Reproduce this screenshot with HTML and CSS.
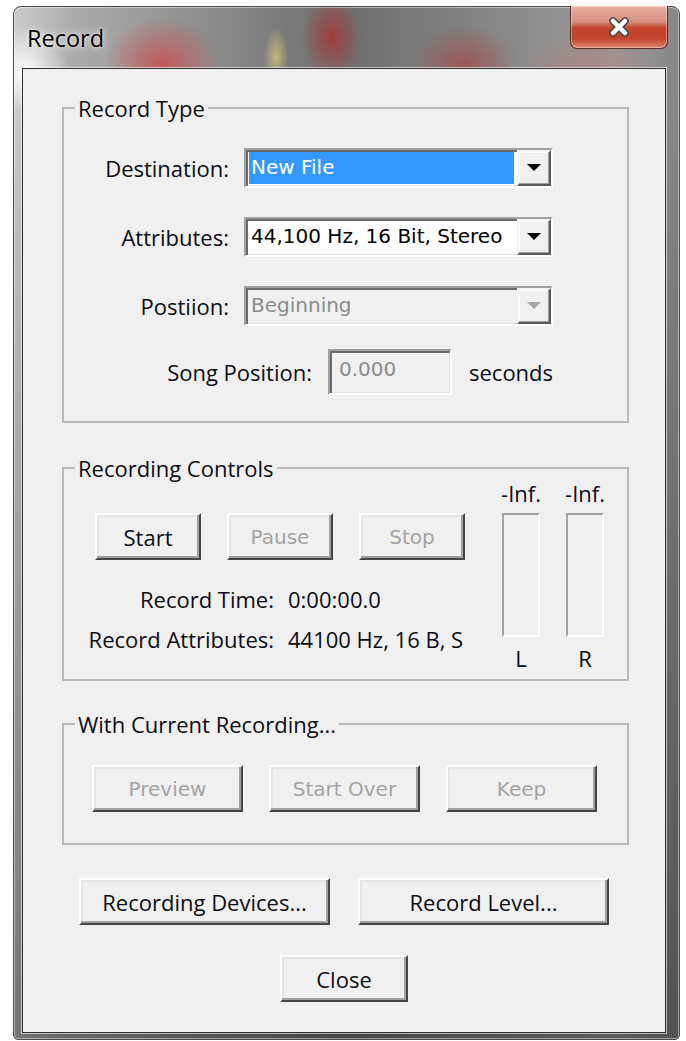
FILE: index.html
```html
<!DOCTYPE html>
<html lang="en">
<head>
<meta charset="utf-8">
<title>Record</title>
<link rel="stylesheet" href="styles.css">
</head>
<body>
<div class="window">
  <div class="titlebar">
    <span class="title">Record</span>
    <button class="close-btn" aria-label="Close">
      <svg width="28" height="22" viewBox="0 0 28 22">
        <path d="M8 5 L20 17 M20 5 L8 17" stroke="#4a4a4a" stroke-width="7.5" stroke-linecap="round"/>
        <path d="M8 5 L20 17 M20 5 L8 17" stroke="#ffffff" stroke-width="4.5" stroke-linecap="round"/>
      </svg>
    </button>
  </div>

  <div class="client">
    <fieldset class="group group-type">
      <legend>Record Type</legend>
      <div class="type-grid">
        <label class="lbl">Destination:</label>
        <div class="combo">
          <span class="combo-value selected">New File</span>
          <span class="combo-drop"><svg width="14" height="8" viewBox="0 0 14 8"><path d="M0 0H14L7 7Z" fill="#000"/></svg></span>
        </div>

        <label class="lbl">Attributes:</label>
        <div class="combo">
          <span class="combo-value">44,100 Hz, 16 Bit, Stereo</span>
          <span class="combo-drop"><svg width="14" height="8" viewBox="0 0 14 8"><path d="M0 0H14L7 7Z" fill="#000"/></svg></span>
        </div>

        <label class="lbl">Postiion:</label>
        <div class="combo disabled">
          <span class="combo-value">Beginning</span>
          <span class="combo-drop"><svg width="14" height="8" viewBox="0 0 14 8"><path d="M0 0H14L7 7Z" fill="#a6a6a6"/></svg></span>
        </div>
      </div>
      <div class="song-row">
        <label class="lbl">Song Position:</label>
        <div class="textbox">0.000</div>
        <span class="lbl-plain">seconds</span>
      </div>
    </fieldset>

    <fieldset class="group group-controls">
      <legend>Recording Controls</legend>
      <div class="rec-body">
        <div class="rec-main">
          <div class="rec-buttons">
            <button class="btn btn-small">Start</button>
            <button class="btn btn-small" disabled>Pause</button>
            <button class="btn btn-small" disabled>Stop</button>
          </div>
          <div class="rec-info">
            <span class="lbl">Record Time:</span>
            <span class="val">0:00:00.0</span>
            <span class="lbl">Record Attributes:</span>
            <span class="val">44100 Hz, 16 B, S</span>
          </div>
        </div>
        <div class="meters">
          <div class="meter">
            <span class="meter-db">-Inf.</span>
            <div class="meter-bar"></div>
            <span class="meter-ch">L</span>
          </div>
          <div class="meter">
            <span class="meter-db">-Inf.</span>
            <div class="meter-bar"></div>
            <span class="meter-ch">R</span>
          </div>
        </div>
      </div>
    </fieldset>

    <fieldset class="group group-keep">
      <legend>With Current Recording...</legend>
      <div class="keep-row">
        <button class="btn btn-mid" disabled>Preview</button>
        <button class="btn btn-mid" disabled>Start Over</button>
        <button class="btn btn-mid" disabled>Keep</button>
      </div>
    </fieldset>

    <div class="footer-row">
      <button class="btn btn-wide">Recording Devices...</button>
      <button class="btn btn-wide">Record Level...</button>
    </div>
    <button class="btn btn-close">Close</button>
  </div>
</div>
</body>
</html>
```

FILE: styles.css
```css
* {
  box-sizing: border-box;
}

html, body {
  margin: 0;
  padding: 0;
}

body {
  width: 686px;
  height: 1041px;
  overflow: hidden;
  background: #ffffff;
  font-family: "Open Sans", "Noto Sans", sans-serif;
  font-size: 22px;
  color: #0c0c14;
}

/* Aero-style window frame with glass title bar */
.window {
  margin: 6px 0 0 13px;
  width: 667px;
  height: 1034px;
  padding: 0 13px 8px 8px;
  display: flex;
  flex-direction: column;
  border: 1px solid #4c4c4c;
  border-radius: 8px 8px 5px 5px;
  box-shadow: inset 0 0 0 1px rgba(255, 255, 255, 0.45);
  background:
    radial-gradient(circle at 10px 64px, rgba(255, 255, 255, 0.95) 0, rgba(255, 255, 255, 0) 44px),
    radial-gradient(ellipse 58px 46px at 148px 56px, rgba(200, 80, 80, 0.85) 0, rgba(200, 80, 80, 0) 100%),
    radial-gradient(ellipse 12px 30px at 262px 50px, rgba(215, 200, 120, 0.75) 0, rgba(215, 200, 120, 0) 100%),
    radial-gradient(ellipse 30px 42px at 318px 30px, rgba(175, 45, 45, 0.75) 0, rgba(175, 45, 45, 0) 100%),
    radial-gradient(ellipse 52px 38px at 450px 56px, rgba(175, 60, 60, 0.6) 0, rgba(175, 60, 60, 0) 100%),
    radial-gradient(ellipse 70px 40px at 575px 62px, rgba(190, 110, 110, 0.45) 0, rgba(190, 110, 110, 0) 100%),
    linear-gradient(180deg, rgba(0, 0, 0, 0) 0, rgba(0, 0, 0, 0) 80px, rgba(30, 30, 30, 0.5) 100%),
    linear-gradient(90deg, #cbcbcb 0, #acacac 60px, #868686 220px, #6e6e6e 330px, #868686 480px, #9c9c9c 600px, #858585 667px);
}

.titlebar {
  height: 61px;
  flex: none;
  display: flex;
  justify-content: space-between;
  align-items: flex-start;
  padding-left: 5px;
}

.title {
  margin-top: 16px;
  font-size: 23.5px;
  line-height: 30px;
  color: #000;
  text-shadow: 0 0 8px rgba(255, 255, 255, 0.9), 0 0 3px rgba(255, 255, 255, 0.8);
}

.close-btn {
  margin: -1px -2px 0 0;
  width: 98px;
  height: 43px;
  padding: 0;
  display: flex;
  align-items: center;
  justify-content: center;
  border: 1px solid #5b2c24;
  border-top: none;
  border-radius: 0 0 7px 7px;
  background: linear-gradient(180deg, #e6b2a5 0%, #d88f7e 38%, #c4432c 52%, #c2452f 78%, #df8570 100%);
  box-shadow: inset 0 0 0 1px rgba(255, 255, 255, 0.35);
}

/* Dialog client area */
.client {
  flex: 1;
  display: flex;
  flex-direction: column;
  align-items: flex-start;
  padding: 26px 0 30px;
  background: #f0f0f0;
  border: 1px solid #303030;
  box-shadow: 0 0 0 1px rgba(255, 255, 255, 0.6);
}

/* Group boxes */
.group {
  margin: 0 0 0 39px;
  padding: 0;
  width: 567px;
  min-width: 0;
  border: 2px solid #b9b9b9;
}

.group legend {
  margin-left: 11px;
  padding: 0 3px;
  font-size: 22px;
  line-height: 26px;
  color: #0c0c14;
}

.group-controls {
  margin-top: 32px;
}

.group-keep {
  margin-top: 30px;
}

.lbl {
  text-align: right;
  white-space: nowrap;
}

.lbl-plain,
.val {
  white-space: nowrap;
}

/* Record Type fields */
.type-grid {
  display: grid;
  grid-template-columns: 165px 309px;
  grid-auto-rows: 40px;
  column-gap: 15px;
  row-gap: 29px;
  align-items: center;
  padding-top: 27px;
}

.combo {
  display: flex;
  height: 40px;
  padding: 2px 0 0 3px;
  background: #ffffff;
  border: 2px solid;
  border-color: #a0a0a0 #ffffff #ffffff #a0a0a0;
  box-shadow: inset 2px 2px 0 #6a6a6a, inset -1px -1px 0 #e3e3e3;
  font-family: "DejaVu Sans", sans-serif;
  font-size: 20px;
}

.combo-value {
  flex: 1;
  margin: 0 3px 2px 0;
  padding-left: 2px;
  line-height: 31px;
  color: #000;
  white-space: nowrap;
  overflow: hidden;
}

.combo-value.selected {
  background: #3399ff;
  color: #ffffff;
}

.combo-drop {
  width: 34px;
  margin-top: -2px;
  display: flex;
  align-items: center;
  justify-content: center;
  background: #f0f0f0;
  border: 2px solid;
  border-color: #f4f4f4 #5a5a5a #5a5a5a #f4f4f4;
  box-shadow: inset -1px -1px 0 #a0a0a0, inset 1px 1px 0 #ffffff;
}

.combo.disabled {
  background: #f0f0f0;
}

.combo.disabled .combo-value {
  color: #8c8c8c;
}

.song-row {
  display: grid;
  grid-template-columns: 248px 124px auto;
  column-gap: 16px;
  align-items: center;
  margin-top: 23px;
  padding-bottom: 26px;
}

.song-row .lbl-plain {
  margin-left: 1px;
}

.textbox {
  height: 46px;
  padding: 4px 0 0 9px;
  background: #f0f0f0;
  border: 2px solid;
  border-color: #a0a0a0 #ffffff #ffffff #a0a0a0;
  box-shadow: inset 2px 2px 0 #6a6a6a, inset -1px -1px 0 #e3e3e3;
  font-family: "DejaVu Sans", sans-serif;
  font-size: 20px;
  line-height: 28px;
  color: #8c8c8c;
}

/* Push buttons */
.btn {
  height: 47px;
  padding: 0;
  background: #f0f0f0;
  border: 2px solid;
  border-color: #ffffff #454545 #454545 #ffffff;
  box-shadow: inset -2px -2px 0 #a0a0a0, inset 2px 2px 0 #e6e6e6;
  font-family: "Open Sans", "Noto Sans", sans-serif;
  font-size: 22px;
  color: #0c0c14;
}

.btn:disabled {
  font-family: "DejaVu Sans", sans-serif;
  font-size: 20px;
  color: #a3a3a3;
}

.btn-small {
  width: 106px;
}

.btn-mid {
  width: 151px;
}

.btn-wide {
  width: 251px;
}

/* Recording controls */
.rec-body {
  display: flex;
  padding-bottom: 9px;
}

.rec-main {
  width: 430px;
  flex: none;
  padding-top: 32px;
}

.rec-buttons {
  display: flex;
  gap: 26px;
  padding-left: 31px;
}

.rec-info {
  display: grid;
  grid-template-columns: 210px auto;
  grid-auto-rows: 40px;
  column-gap: 14px;
  align-items: center;
  margin-top: 19px;
}

.meters {
  display: flex;
  gap: 10px;
}

.meter {
  width: 54px;
  display: flex;
  flex-direction: column;
  align-items: center;
}

.meter-db,
.meter-ch {
  line-height: 24px;
}

.meter-bar {
  width: 38px;
  height: 124px;
  margin-top: 8px;
  background: #f0f0f0;
  border: 2px solid;
  border-color: #a3a3a3 #ffffff #ffffff #a3a3a3;
}

.meter-ch {
  margin-top: 9px;
}

/* With current recording */
.keep-row {
  display: flex;
  gap: 26px;
  padding: 28px 0 31px 28px;
}

/* Bottom buttons */
.footer-row {
  align-self: center;
  display: flex;
  gap: 28px;
  margin-top: 33px;
}

.btn-close {
  align-self: center;
  width: 128px;
  margin-top: 30px;
}
```
